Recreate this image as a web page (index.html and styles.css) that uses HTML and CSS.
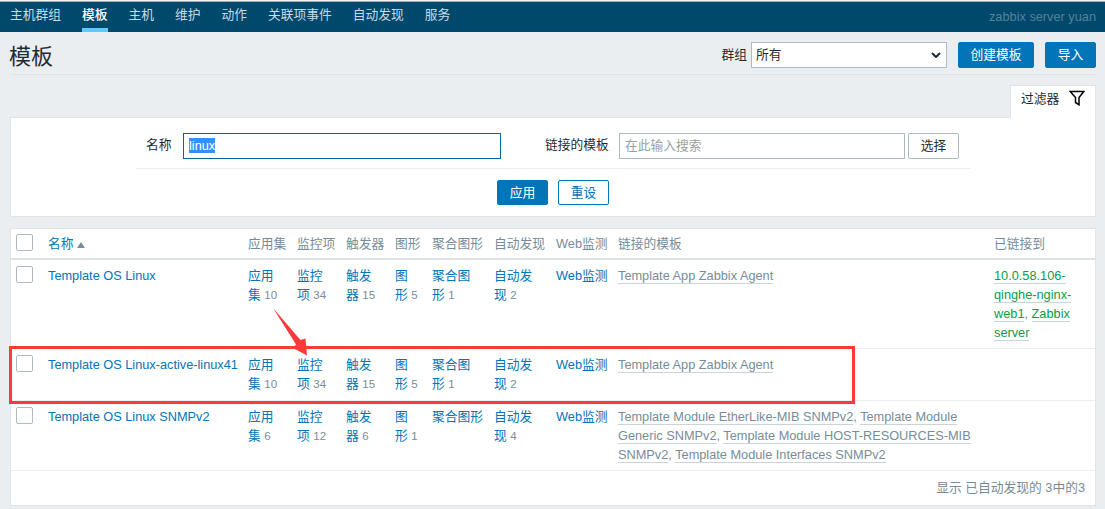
FILE: index.html
```
<!DOCTYPE html>
<html lang="zh-CN">
<head>
    <meta charset="UTF-8">
    <meta name="viewport" content="width=device-width, initial-scale=1.0">
    <title>模板</title>
    <link rel="stylesheet" href="styles.css">
</head>
<body>
    <nav class="top-subnav">
        <a href="#">主机群组</a>
        <a href="#" class="selected">模板</a>
        <a href="#">主机</a>
        <a href="#">维护</a>
        <a href="#">动作</a>
        <a href="#">关联项事件</a>
        <a href="#">自动发现</a>
        <a href="#">服务</a>
        <span class="server-name">zabbix server yuan</span>
    </nav>

    <div class="article">
        <div class="header-title">
            <h1>模板</h1>
            <div class="controls">
                <label>群组</label>
                <div class="select">
                    <span>所有</span>
                    <svg width="10" height="6" viewBox="0 0 10 6"><path d="M1 1l4 4 4-4" fill="none" stroke="#1f2c33" stroke-width="2"/></svg>
                </div>
                <button class="btn btn-create">创建模板</button>
                <button class="btn btn-import">导入</button>
            </div>
        </div>

        <div class="filter-tab">
            <span>过滤器</span>
            <svg width="16" height="16" viewBox="0 0 16 16"><path d="M1.200 1.500h13.600L10 7.500v7.300L6.500 12.500v-5z" fill="none" stroke="#000" stroke-width="1.500"/></svg>
        </div>
        <div class="filter">
            <div class="filter-fields">
                <label class="label-name">名称</label>
                <div class="input input-name"><span class="selection">linux</span></div>
                <label class="label-linked">链接的模板</label>
                <div class="input input-linked">在此输入搜索</div>
                <button class="btn btn-grey">选择</button>
            </div>
            <div class="filter-buttons">
                <button class="btn">应用</button>
                <button class="btn btn-alt">重设</button>
            </div>
        </div>

        <div class="table-wrap">
            <table class="list-table">
                <colgroup>
                    <col class="c-check"><col class="c-name"><col class="c-item"><col class="c-item"><col class="c-item"><col class="c-graph"><col class="c-wide"><col class="c-wide"><col class="c-wide"><col class="c-linked"><col class="c-hosts">
                </colgroup>
                <thead>
                    <tr>
                        <th><span class="checkbox"></span></th>
                        <th><a href="#">名称</a><span class="arrow-up"></span></th>
                        <th>应用集</th>
                        <th>监控项</th>
                        <th>触发器</th>
                        <th>图形</th>
                        <th>聚合图形</th>
                        <th>自动发现</th>
                        <th>Web监测</th>
                        <th>链接的模板</th>
                        <th>已链接到</th>
                    </tr>
                </thead>
                <tbody>
                    <tr class="row-1">
                        <td><span class="checkbox"></span></td>
                        <td class="name"><a href="#">Template OS Linux</a></td>
                        <td><a href="#">应用集</a>&nbsp;<span class="count">10</span></td>
                        <td><a href="#">监控项</a>&nbsp;<span class="count">34</span></td>
                        <td><a href="#">触发器</a>&nbsp;<span class="count">15</span></td>
                        <td><a href="#">图形</a>&nbsp;<span class="count">5</span></td>
                        <td><a href="#">聚合图形</a>&nbsp;<span class="count">1</span></td>
                        <td><a href="#">自动发现</a>&nbsp;<span class="count">2</span></td>
                        <td><a href="#">Web监测</a></td>
                        <td><a href="#" class="grey">Template App Zabbix Agent</a></td>
                        <td><a href="#" class="green">10.0.58.106-qinghe-nginx-web1</a>, <a href="#" class="green">Zabbix server</a></td>
                    </tr>
                    <tr class="row-2">
                        <td><span class="checkbox"></span></td>
                        <td class="name"><a href="#">Template OS Linux-active-linux41</a></td>
                        <td><a href="#">应用集</a>&nbsp;<span class="count">10</span></td>
                        <td><a href="#">监控项</a>&nbsp;<span class="count">34</span></td>
                        <td><a href="#">触发器</a>&nbsp;<span class="count">15</span></td>
                        <td><a href="#">图形</a>&nbsp;<span class="count">5</span></td>
                        <td><a href="#">聚合图形</a>&nbsp;<span class="count">1</span></td>
                        <td><a href="#">自动发现</a>&nbsp;<span class="count">2</span></td>
                        <td><a href="#">Web监测</a></td>
                        <td><a href="#" class="grey">Template App Zabbix Agent</a></td>
                        <td></td>
                    </tr>
                    <tr class="row-3">
                        <td><span class="checkbox"></span></td>
                        <td class="name"><a href="#">Template OS Linux SNMPv2</a></td>
                        <td><a href="#">应用集</a>&nbsp;<span class="count">6</span></td>
                        <td><a href="#">监控项</a>&nbsp;<span class="count">12</span></td>
                        <td><a href="#">触发器</a>&nbsp;<span class="count">6</span></td>
                        <td><a href="#">图形</a>&nbsp;<span class="count">1</span></td>
                        <td><a href="#">聚合图形</a></td>
                        <td><a href="#">自动发现</a>&nbsp;<span class="count">4</span></td>
                        <td><a href="#">Web监测</a></td>
                        <td><a href="#" class="grey">Template Module EtherLike-MIB SNMPv2</a>, <a href="#" class="grey">Template Module Generic SNMPv2</a>, <a href="#" class="grey">Template Module HOST-RESOURCES-MIB SNMPv2</a>, <a href="#" class="grey">Template Module Interfaces SNMPv2</a></td>
                        <td></td>
                    </tr>
                </tbody>
            </table>
            <div class="table-stats">显示 已自动发现的 3中的3</div>

            <!-- annotation over the second row -->
            <div class="mark-box"></div>
            <svg class="mark-arrow" width="40" height="50" viewBox="0 0 40 50"><path d="M1 0L28.500 32L33.500 30.500L35 47.500L21 40L24 36.500Z" fill="#fd3a3a"/></svg>
        </div>
    </div>
</body>
</html>
```
FILE: styles.css
```
* {
    margin: 0;
    padding: 0;
    box-sizing: border-box;
}

body {
    font-family: "Liberation Sans", "Noto Sans CJK SC", sans-serif;
    font-size: 12.75px;
    line-height: 19px;
    color: #1f2c33;
    background: #ebeef0;
    height: 509px;
    overflow: hidden;
    border-top: 1px solid #f0f2f3;
}

a {
    color: #0275b8;
    text-decoration: none;
}

.top-subnav {
    display: flex;
    gap: 21px;
    height: 31px;
    padding: 0 9px 0 10px;
    background: #00486c;
    border-top: 1px solid #a5b0b5;
}

.top-subnav a {
    height: 30px;
    padding-top: 3px;
    color: #c8dbe5;
    white-space: nowrap;
}

.top-subnav a.selected {
    color: #fff;
    font-weight: 500;
    border-bottom: 4px solid #5fcaf9;
}

.server-name {
    margin-left: auto;
    padding-top: 5px;
    color: #578297;
}

.article {
    padding: 0 9px 0 10px;
}

.header-title {
    display: flex;
    justify-content: space-between;
    height: 43px;
    padding-top: 10px;
    border-bottom: 1px solid #dfe4e7;
}

h1 {
    margin-left: -1px;
    padding-top: 1px;
    font-size: 22px;
    line-height: 28px;
    font-weight: normal;
}

.controls {
    display: flex;
    height: 26px;
    line-height: 26px;
}

.select {
    display: flex;
    align-items: center;
    justify-content: space-between;
    width: 196px;
    margin-left: 4px;
    padding: 0 5px 0 4px;
    background: #fff;
    border: 1px solid #acbbc2;
}

.btn {
    width: 51px;
    height: 26px;
    font: inherit;
    line-height: 24px;
    color: #fff;
    background: #0275b8;
    border: 1px solid #0275b8;
    border-radius: 2px;
}

.btn-create {
    width: 76px;
    margin: 0 11px;
}

.btn-alt {
    color: #0275b8;
    background: #fff;
}

.btn-grey {
    margin-left: 3px;
    color: #1f2c33;
    background: #fff;
    border-color: #acbbc2;
}

.filter-tab {
    display: flex;
    align-items: center;
    justify-content: space-between;
    position: relative;
    width: 86px;
    height: 33px;
    margin: 10px 0 -1px auto;
    padding: 0 10px 8px;
    background: #fff;
    border: 1px solid #dfe4e7;
    border-bottom: none;
}

.filter {
    height: 100px;
    padding: 15px 125px 0;
    background: #fff;
    border: 1px solid #dfe4e7;
}

.filter-fields {
    display: flex;
    height: 36px;
    line-height: 24px;
    border-bottom: 1px solid #ebeef0;
}

.label-name {
    width: 47px;
    padding-left: 10px;
}

.label-linked {
    width: 118px;
    padding-left: 44px;
}

.input {
    height: 26px;
    padding: 0 5px;
    border: 1px solid #acbbc2;
    color: #9a9fa1;
}

.input-name {
    width: 318px;
    border-color: #00689e;
}

.input-linked {
    width: 286px;
}

.selection {
    display: inline-block;
    height: 15px;
    line-height: 15px;
    color: #fff;
    background: #3390ff;
}

.filter-buttons {
    display: flex;
    justify-content: center;
    gap: 10px;
    padding-top: 11px;
}

.filter-buttons .btn {
    height: 25px;
}

.table-wrap {
    position: relative;
    height: 278px;
    margin-top: 11px;
    background: #fff;
    border: 1px solid #dfe4e7;
}

.list-table {
    width: 1084px;
    table-layout: fixed;
    border-collapse: collapse;
}

.c-check { width: 32px; }
.c-name { width: 200px; }
.c-item { width: 49px; }
.c-graph { width: 37px; }
.c-wide { width: 62px; }
.c-linked { width: 376px; }
.c-hosts { width: 106px; }

th,
td {
    padding: 6px 5px 0;
    text-align: left;
    vertical-align: top;
}

td:nth-child(10) {
    padding-right: 10px;
}

td:last-child {
    padding-right: 15px;
}

th {
    height: 30px;
    padding-top: 5px;
    font-weight: normal;
    color: #768d99;
    white-space: nowrap;
    border-bottom: 2px solid #dce2e5;
}

td {
    border-bottom: 1px solid #ebeef0;
    color: #768d99;
}

.name {
    white-space: nowrap;
}

.row-1 { height: 89px; }
.row-2 { height: 52px; }
.row-3 { height: 70px; }

.checkbox {
    display: block;
    width: 17px;
    height: 17px;
    border: 1px solid #acbbc2;
    border-radius: 2px;
}

.arrow-up {
    display: inline-block;
    margin-left: 3px;
    border: 4px solid transparent;
    border-top: none;
    border-bottom: 6px solid #768d99;
}

.count {
    font-size: 11.5px;
}

.grey,
.green {
    border-bottom: 1px solid #cbd4d9;
}

.grey {
    color: #768d99;
}

.green {
    color: #089c4b;
}

.table-stats {
    padding: 7px 10px 0;
    text-align: right;
    color: #768d99;
}

.mark-box {
    position: absolute;
    left: -2px;
    top: 117px;
    width: 846px;
    height: 58px;
    border: 3px solid #fd3a3a;
}

.mark-arrow {
    position: absolute;
    left: 261px;
    top: 79px;
}
```
